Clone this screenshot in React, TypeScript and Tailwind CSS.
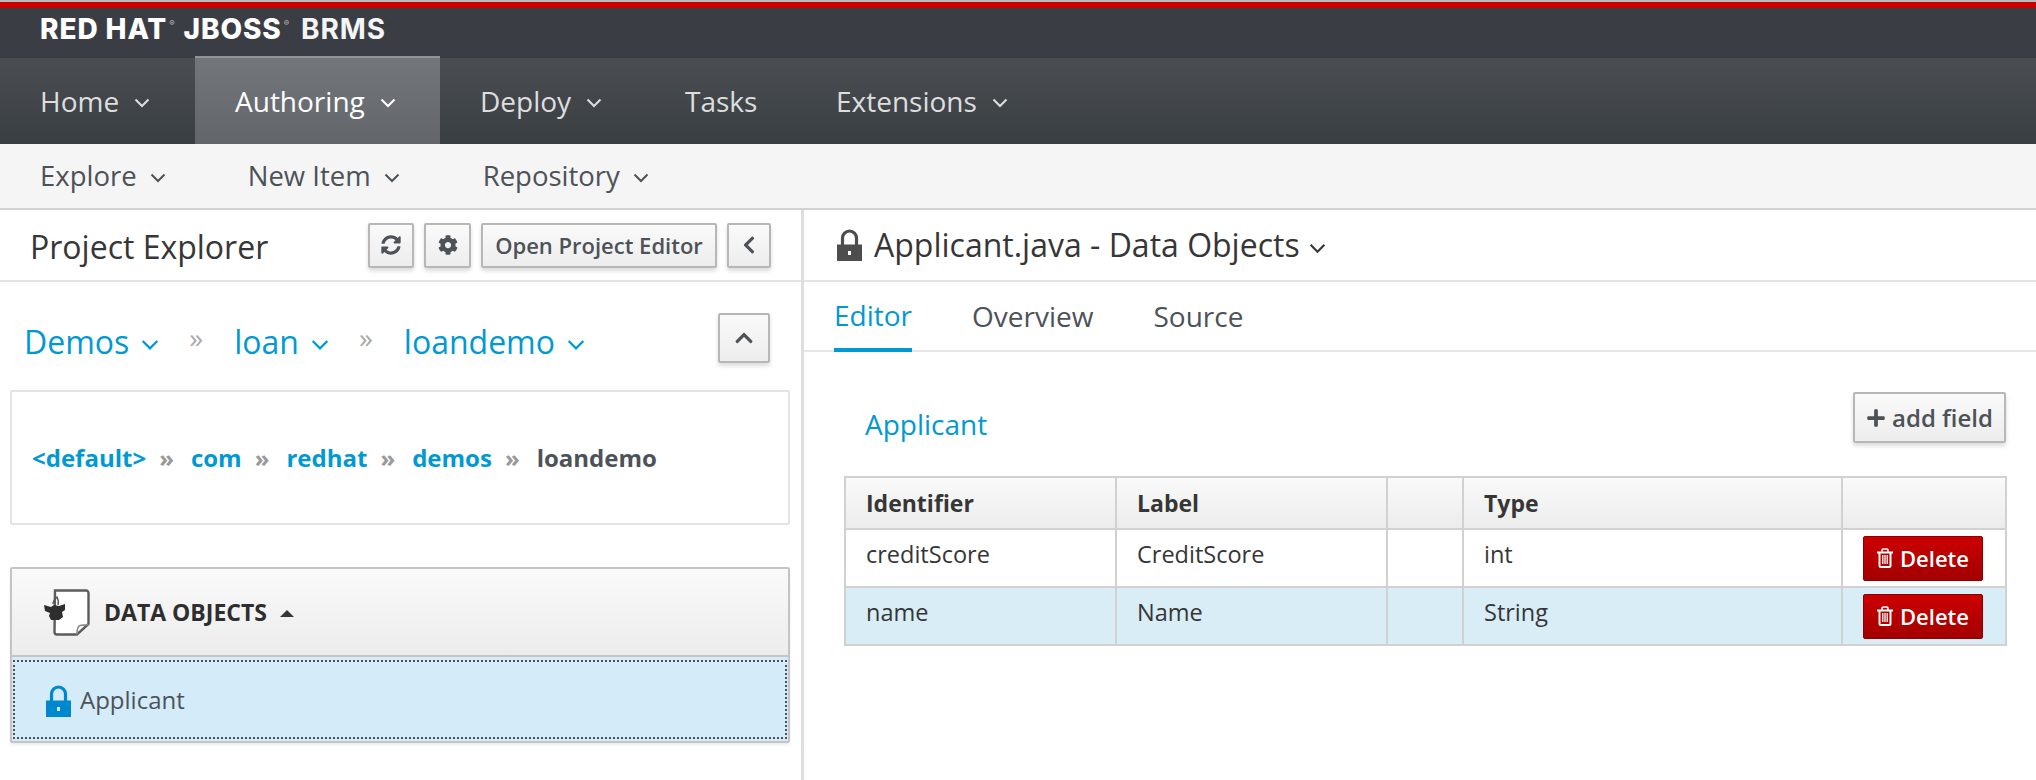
import { FaChevronLeft, FaChevronUp, FaCog, FaPlus, FaSyncAlt } from "react-icons/fa";

function Chevron({ className = "" }: { className?: string }) {
  return (
    <svg viewBox="0 0 16 10" className={className} fill="none" stroke="currentColor" strokeWidth="2">
      <path d="M1.5 1.5 8 8l6.5-6.5" />
    </svg>
  );
}

function Lock({ color, className = "" }: { color: string; className?: string }) {
  return (
    <svg viewBox="0 0 25 32" className={className}>
      <path d="M5.5 16V9a7 7 0 0 1 14 0v7" fill="none" stroke={color} strokeWidth="3.2" />
      <path fillRule="evenodd" fill={color} d="M0 15.5h25V32H0zM11 22v4h3v-4z" />
    </svg>
  );
}

function Trash() {
  return (
    <svg viewBox="0 0 16 20" className="h-[20px] w-[16px]" fill="none" stroke="currentColor">
      <path d="M0 4.5h16" strokeWidth="2" />
      <path d="M5 4V2.2C5 1.4 5.6 1 6.2 1h3.6c.6 0 1.2.4 1.2 1.2V4" strokeWidth="1.6" />
      <path d="M2.5 5v12.5c0 .9.6 1.5 1.5 1.5h8c.9 0 1.5-.6 1.5-1.5V5" strokeWidth="2" />
      <path d="M5.8 7v9M8 7v9M10.2 7v9" strokeWidth="1.3" />
    </svg>
  );
}

function DocIcon() {
  return (
    <svg viewBox="0 0 46 47" className="h-[47px] w-[46px] shrink-0">
      <path d="M11 1.5h31a2.5 2.5 0 0 1 2.5 2.5v31L33 45.5H13a2.5 2.5 0 0 1-2.5-2.5z" fill="#fff" stroke="#5b5b5b" strokeWidth="2.4" />
      <path d="M33 45.5c0-4 0-8 3-9s6 .5 8.5-1.5" fill="none" stroke="#8a8a8a" strokeWidth="1.6" />
      <path d="M0 16l7 2 3-2 5 1 6-2 0 6-3 2 1 5-4 3H7l-2-4 1-3-5-2z" fill="#2e2e2e" />
      <path d="M9 15c0-3 2-5 4-7 1 2 2 5 1 8" fill="none" stroke="#555" strokeWidth="1.4" />
    </svg>
  );
}

function GreyButton({ className = "", children }: { className?: string; children: React.ReactNode }) {
  return (
    <button className={`flex items-center justify-center rounded-[2px] border-2 border-[#b7b7b7] bg-gradient-to-b from-[#fafafa] to-[#ededed] text-[#4d5258] shadow-[0_3px_4px_rgba(0,0,0,0.14)] ${className}`}>
      {children}
    </button>
  );
}

function DeleteButton() {
  return (
    <button className="flex h-[45px] w-[120px] items-center justify-center gap-[7px] rounded-[2px] border border-[#8b0000] bg-gradient-to-b from-[#cc0000] to-[#a30000] text-[22px] font-semibold text-white">
      <Trash />
      Delete
    </button>
  );
}

const mainNav = [
  { label: "Home", w: "w-[195px]", chevron: true },
  { label: "Authoring", w: "w-[245px]", chevron: true, active: true },
  { label: "Deploy", w: "w-[205px]", chevron: true },
  { label: "Tasks", w: "w-[151px]", chevron: false },
  { label: "Extensions", w: "w-[230px]", chevron: true },
];

const pathParts = ["<default>", "com", "redhat", "demos"];

const cell = "border-2 border-[#d1d1d1] px-[20px] text-left";
const textCell = `${cell} pb-[6px] text-[23.5px]`;

export default function App() {
  return (
    <div className="h-[780px] w-[2036px] overflow-hidden bg-white font-['Open_Sans',sans-serif] text-[#363636]">
      {/* Brand bar */}
      <div className="h-[58px] border-t-2 border-[#bdbdbd] bg-[#3a3e44]">
        <div className="h-[6px] bg-[#cc0000]" />
        <div className="flex h-[48px] items-center pb-[6px] pl-[40px] font-['Inter',sans-serif] text-[28px] leading-none font-extrabold tracking-[0.9px] text-white">
          RED HAT<span className="mb-[12px] ml-[2px] text-[8px] font-normal text-[#bbb]">®</span>
          <span className="ml-[8px]">JBOSS</span>
          <span className="mb-[12px] ml-[2px] text-[8px] font-normal text-[#bbb]">®</span>
          <span className="ml-[11px] font-bold text-[#f4f4f4]">BRMS</span>
        </div>
      </div>

      {/* Main nav */}
      <div className="flex h-[86px] bg-gradient-to-b from-[#4a4e53] to-[#393e43]">
        {mainNav.map((item) => (
          <div
            key={item.label}
            className={`flex h-[86px] items-center pl-[40px] text-[28px] ${item.w} ${
              item.active
                ? "-mt-[2px] h-[88px] border-t-2 border-[#909499] bg-gradient-to-b from-[#73767b] to-[#62666b] text-white"
                : "text-[#dedede]"
            }`}
          >
            {item.label}
            {item.chevron && <Chevron className="ml-[15px] mt-[3px] h-[10px] w-[16px]" />}
          </div>
        ))}
      </div>

      {/* Sub nav */}
      <div className="flex h-[66px] items-center border-b-2 border-[#d1d1d1] bg-[#f5f5f5] pl-[40px] text-[27.5px] text-[#4d5258]">
        <span>Explore</span>
        <Chevron className="ml-[13px] mt-[3px] h-[10px] w-[16px]" />
        <span className="ml-[82px]">New Item</span>
        <Chevron className="ml-[13px] mt-[3px] h-[10px] w-[16px]" />
        <span className="ml-[83px]">Repository</span>
        <Chevron className="ml-[13px] mt-[3px] h-[10px] w-[16px]" />
      </div>

      <div className="flex h-[570px]">
        {/* Left panel */}
        <div className="w-[804px] shrink-0 border-r-[3px] border-[#dedede]">
          <div className="flex h-[72px] items-center border-b-2 border-[#e3e3e3]">
            <h2 className="ml-[30px] mt-[3px] w-[338px] text-[32px] leading-none text-[#363636]">Project Explorer</h2>
            <GreyButton className="h-[45px] w-[46px]">
              <FaSyncAlt className="h-[20px] w-[20px]" />
            </GreyButton>
            <GreyButton className="ml-[10px] h-[45px] w-[47px]">
              <FaCog className="h-[20px] w-[20px]" />
            </GreyButton>
            <GreyButton className="ml-[10px] h-[45px] w-[236px] text-[22px] font-semibold">Open Project Editor</GreyButton>
            <GreyButton className="ml-[10px] h-[45px] w-[44px]">
              <FaChevronLeft className="h-[20px] w-[16px]" />
            </GreyButton>
          </div>

          <div className="flex h-[108px] items-center pl-[24px] pt-[12px] text-[32px] text-[#0099d3]">
            <span>Demos</span>
            <Chevron className="ml-[12px] mt-[6px] h-[12px] w-[18px]" />
            <span className="mb-[10px] ml-[30px] text-[28px] text-[#aaa]">»</span>
            <span className="ml-[31px]">loan</span>
            <Chevron className="ml-[12px] mt-[6px] h-[12px] w-[18px]" />
            <span className="mb-[10px] ml-[30px] text-[28px] text-[#aaa]">»</span>
            <span className="ml-[31px]">loandemo</span>
            <Chevron className="ml-[12px] mt-[6px] h-[12px] w-[18px]" />
            <GreyButton className="ml-auto mr-[31px] mt-[-8px] h-[50px] w-[52px]">
              <FaChevronUp className="h-[20px] w-[24px]" />
            </GreyButton>
          </div>

          <div className="ml-[10px] flex h-[135px] w-[780px] items-center rounded-[2px] border-2 border-[#e3e3e3] pl-[20px] text-[24px] font-bold">
            {pathParts.map((part) => (
              <span key={part} className="flex items-center">
                <span className="text-[#0099d3]">{part}</span>
                <span className="ml-[13px] mr-[17px] text-[#999]">»</span>
              </span>
            ))}
            <span className="text-[#4d5258]">loandemo</span>
          </div>

          <div className="ml-[10px] mt-[42px] w-[780px] rounded-[2px] border-2 border-[#c4c4c4] shadow-[0_2px_3px_rgba(0,0,0,0.08)]">
            <div className="flex h-[88px] items-center border-b-2 border-[#c4c4c4] bg-gradient-to-b from-[#fafafa] to-[#ececec] pl-[32px]">
              <DocIcon />
              <span className="ml-[14px] text-[23px] font-bold text-[#2e2e2e]">DATA OBJECTS</span>
              <span className="ml-[13px] mt-[2px] h-0 w-0 border-x-[7px] border-b-[7px] border-x-transparent border-b-[#363636]" />
            </div>
            <div className="bg-[#d4ecf9] px-[1px] pb-[2px] pt-[3px]">
              <div className="flex h-[79px] items-center border-2 border-dotted border-[#4d5258] pl-[31px] text-[24px] text-[#4d5258]">
                <Lock color="#0088ce" className="mt-[3px] h-[32px] w-[25px]" />
                <span className="ml-[9px]">Applicant</span>
              </div>
            </div>
          </div>
        </div>

        {/* Right panel */}
        <div className="min-w-0 flex-1">
          <div className="flex h-[72px] items-center border-b-2 border-[#e3e3e3] pl-[33px] text-[32px] text-[#363636]">
            <Lock color="#4d4d4d" className="mt-[-1px] h-[32px] w-[25px]" />
            <span className="ml-[12px]">Applicant.java - Data Objects</span>
            <Chevron className="ml-[9px] mt-[6px] h-[11px] w-[17px]" />
          </div>

          <div className="flex h-[70px] items-stretch border-b-2 border-[#e6e6e6] pl-[30px] text-[28px] text-[#4d5258]">
            <div className="-mb-[2px] flex items-center border-b-4 border-[#0099d3] text-[#0099d3]">Editor</div>
            <div className="ml-[60px] flex items-center">Overview</div>
            <div className="ml-[60px] flex items-center">Source</div>
          </div>

          <div className="pl-[40px] pr-[30px]">
            <div className="flex h-[124px] items-start justify-between">
              <span className="ml-[21px] mt-[52px] text-[28px] leading-[40px] text-[#0099d3]">Applicant</span>
              <GreyButton className="mt-[40px] h-[51px] w-[153px] gap-[6px] text-[24px] font-semibold">
                <FaPlus className="h-[20px] w-[20px]" />
                add field
              </GreyButton>
            </div>

            <table className="w-[1161px] table-fixed border-collapse border-2 border-[#d1d1d1] text-[23px]">
              <colgroup>
                <col className="w-[271px]" />
                <col className="w-[271px]" />
                <col className="w-[76px]" />
                <col className="w-[379px]" />
                <col className="w-[164px]" />
              </colgroup>
              <thead>
                <tr className="h-[52px] bg-gradient-to-b from-[#fafafa] to-[#ececec] text-[#363636]">
                  <th className={`${cell} font-bold`}>Identifier</th>
                  <th className={`${cell} font-bold`}>Label</th>
                  <th className={cell} />
                  <th className={`${cell} font-bold`}>Type</th>
                  <th className={cell} />
                </tr>
              </thead>
              <tbody className="text-[#363636]">
                <tr className="h-[58px]">
                  <td className={textCell}>creditScore</td>
                  <td className={textCell}>CreditScore</td>
                  <td className={cell} />
                  <td className={textCell}>int</td>
                  <td className={cell}><DeleteButton /></td>
                </tr>
                <tr className="h-[58px] bg-[#d9edf7]">
                  <td className={textCell}>name</td>
                  <td className={textCell}>Name</td>
                  <td className={cell} />
                  <td className={textCell}>String</td>
                  <td className={cell}><DeleteButton /></td>
                </tr>
              </tbody>
            </table>
          </div>
        </div>
      </div>
    </div>
  );
}
